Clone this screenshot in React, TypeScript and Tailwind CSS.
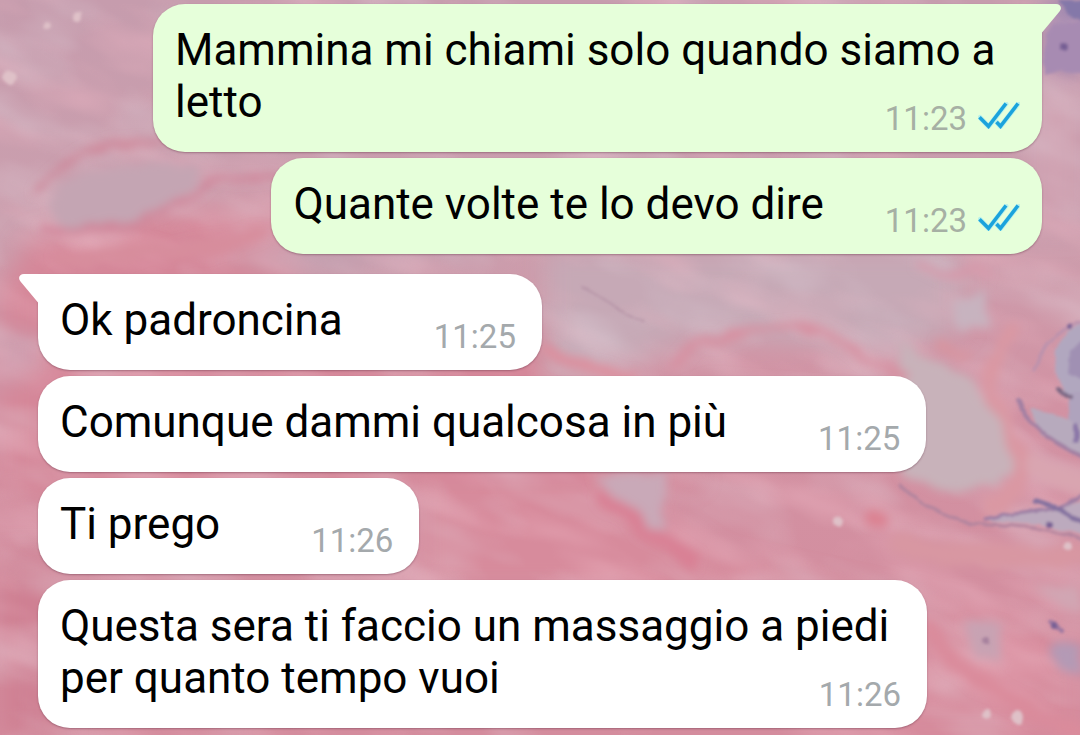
import clsx from 'clsx';

type Message = {
  text: string;
  time: string;
  outgoing?: boolean;
  first?: boolean;
};

const messages: Message[] = [
  { text: 'Mammina mi chiami solo quando siamo a letto', time: '11:23', outgoing: true, first: true },
  { text: 'Quante volte te lo devo dire', time: '11:23', outgoing: true },
  { text: 'Ok padroncina', time: '11:25', first: true },
  { text: 'Comunque dammi qualcosa in più', time: '11:25' },
  { text: 'Ti prego', time: '11:26' },
  { text: 'Questa sera ti faccio un massaggio a piedi per quanto tempo vuoi', time: '11:26' },
];

const ReadTicks = () => (
  <svg className="mb-[6px] h-7 w-[42px]" viewBox="0 0 42 28" fill="none" role="img" aria-label="Letto">
    <g stroke="#8ee4fb" strokeWidth="5" strokeLinecap="round" strokeLinejoin="round" opacity="0.5">
      <path d="M2 15.5 10.5 24.5 28 2" />
      <path d="M19 20.5 22.5 24.5 40 2" />
    </g>
    <g stroke="#1ba3dc" strokeWidth="3.6">
      <path d="M1.500 15.200 10.500 24.300 28 1.500" />
      <path d="M18.500 20 22.500 24.300 40 1.500" />
    </g>
  </svg>
);

const Tail = ({ outgoing }: { outgoing?: boolean }) => (
  <svg
    className={clsx('absolute top-0 h-[30px] w-5', outgoing ? 'left-full -ml-px text-[#e6ffda]' : 'right-full -mr-px -scale-x-100 text-white')}
    viewBox="0 0 20 30"
    fill="currentColor"
    aria-hidden="true"
  >
    <path d="M0 0H15C19.500 0 21.500 4 18.500 7.500L1 28.500V30H0Z" />
  </svg>
);

const Bubble = ({ text, time, outgoing, first }: Message) => (
  <li
    className={clsx(
      'relative max-w-[889px] rounded-[32px] pt-5 pb-6 pl-[22px] shadow-[0_1px_2px_rgba(90,40,60,0.4)]',
      outgoing ? 'self-end bg-[#e6ffda] pr-[22px]' : 'self-start bg-white pr-[26px]',
      first && (outgoing ? 'rounded-tr-none' : 'rounded-tl-none'),
      first && !outgoing && 'mt-[14px]',
    )}
  >
    {first && <Tail outgoing={outgoing} />}
    <p className="text-[44px] leading-[52px] text-black">
      {text}
      {/* floats next to the last line and hangs a little below it */}
      <span className={clsx('float-right -mb-6 flex items-center gap-[11px] pt-6', outgoing ? 'ml-[61px]' : 'ml-[91px]')}>
        <time className={clsx('text-[33px] leading-[38px]', outgoing ? 'text-[#a6b0a4]' : 'text-[#a4a9ac]')}>{time}</time>
        {outgoing && <ReadTicks />}
      </span>
    </p>
  </li>
);

const Wallpaper = () => (
  <svg
    className="absolute inset-0 -z-10 h-full w-full"
    viewBox="0 0 1080 735"
    preserveAspectRatio="xMidYMid slice"
    aria-hidden="true"
  >
    <defs>
      <linearGradient id="base" x1="0" y1="0" x2="0" y2="1">
        <stop offset="0" stopColor="#c69cad" />
        <stop offset="0.3" stopColor="#cb9fae" />
        <stop offset="0.55" stopColor="#d292a3" />
        <stop offset="1" stopColor="#d48c9d" />
      </linearGradient>
      <filter id="wide" x="-20%" y="-20%" width="140%" height="140%">
        <feGaussianBlur stdDeviation="12" />
      </filter>
      <filter id="soft" x="-20%" y="-20%" width="140%" height="140%">
        <feTurbulence type="fractalNoise" baseFrequency="0.03" numOctaves="3" seed="4" result="n" />
        <feDisplacementMap in="SourceGraphic" in2="n" scale="18" xChannelSelector="R" yChannelSelector="G" />
        <feGaussianBlur stdDeviation="5" />
      </filter>
      <filter id="fine" x="-20%" y="-20%" width="140%" height="140%">
        <feTurbulence type="fractalNoise" baseFrequency="0.06" numOctaves="2" seed="9" result="n" />
        <feDisplacementMap in="SourceGraphic" in2="n" scale="6" xChannelSelector="R" yChannelSelector="G" />
        <feGaussianBlur stdDeviation="1.6" />
      </filter>
      {/* stretched noise for the fibres: one pale layer, one dark pink */}
      <filter id="pale" x="0" y="0" width="100%" height="100%">
        <feTurbulence type="fractalNoise" baseFrequency="0.009 0.02" numOctaves="3" seed="12" />
        <feColorMatrix values="0 0 0 0 0.79  0 0 0 0 0.72  0 0 0 0 0.78  2.6 0 0 0 -1.15" />
        <feGaussianBlur stdDeviation="2" />
      </filter>
      <filter id="rosy" x="0" y="0" width="100%" height="100%">
        <feTurbulence type="fractalNoise" baseFrequency="0.008 0.024" numOctaves="3" seed="31" />
        <feColorMatrix values="0 0 0 0 0.85  0 0 0 0 0.47  0 0 0 0 0.55  0 2.8 0 0 -1.3" />
        <feGaussianBlur stdDeviation="2" />
      </filter>
    </defs>
    <rect width="1080" height="735" fill="url(#base)" />

    {/* large tissue areas */}
    <g filter="url(#wide)">
      <path d="M30 240 190 205 300 200V300L560 330 700 480 0 500V290Z" fill="#d58799" />
      <path d="M0 560H60V735H0Z" fill="#cf8093" />
      <path d="M0 335H40V368L0 385Z" fill="#c99bad" />
      <path d="M545 250H960V330L900 350 700 335 600 375H545Z" fill="#c6a9b6" />
      <path d="M420 480H600L720 560 1080 640V735H900L640 590H420Z" fill="#d78b9c" />
      <path d="M1030 85H1080V230H1030Z" fill="#cfa0b0" />
      <path d="M1048 0H1080V75L1050 70Z" fill="#9a86b2" />
      <path d="M215 255 320 240 530 258 300 275Z" fill="#c4a0b0" />
    </g>

    {/* fibres */}
    <g transform="rotate(20 540 367)">
      <rect x="-200" y="-300" width="1500" height="1400" filter="url(#pale)" opacity="0.3" />
      <rect x="-200" y="-300" width="1500" height="1400" filter="url(#rosy)" opacity="0.35" />
    </g>

    <g filter="url(#soft)">
      <path d="M50 205C65 172 120 160 198 165 200 195 160 215 100 225 65 232 45 228 50 205Z" fill="#c4a5b3" />
      <path d="M590 474H665V532L640 515Z" fill="#c9a9b8" />
      <path d="M915 350 965 375 1000 415 1018 470 1000 488 940 490 900 475V340Z" fill="#c8b2ba" />
      <g fill="none" strokeLinecap="round">
        <path d="M38 190C60 160 110 138 170 142" stroke="#cf8699" strokeWidth="6" />
        <path d="M40 232C110 232 160 220 200 190 220 180 250 178 285 178" stroke="#d08297" strokeWidth="6" />
        <path d="M60 258C110 250 180 262 260 235" stroke="#d78d9c" strokeWidth="14" />
        <path d="M545 350C570 365 600 372 630 376" stroke="#dc8f9e" strokeWidth="11" />
        <path d="M672 368C690 345 690 342 720 338 770 322 800 320 850 345 860 355 880 370 905 374" stroke="#d790a1" strokeWidth="8" />
        <path d="M920 265C950 290 970 260 980 275" stroke="#d69aab" strokeWidth="9" />
        <path d="M940 345 965 355" stroke="#d8949f" strokeWidth="9" />
        <path d="M1015 330C985 360 985 400 1010 430 1032 475 1025 500 985 506" stroke="#da98a3" strokeWidth="13" />
        <path d="M1035 465 1085 485" stroke="#d9a5b0" strokeWidth="20" />
        <path d="M600 495C630 515 660 540 690 560" stroke="#d98094" strokeWidth="14" />
        <path d="M900 545C950 555 1000 560 1080 555" stroke="#d897a2" strokeWidth="22" />
        <path d="M870 517 880 518" stroke="#dc8191" strokeWidth="14" />
        <path d="M930 630C960 680 1000 690 1080 735" stroke="#da8b9b" strokeWidth="14" />
      </g>
      <path d="M955 300 985 295 990 325 960 332Z" fill="#c7b3bf" />
      <path d="M965 622H1000V660H975Z" fill="#c8a3b3" />
      <path d="M1050 645H1085V680L1056 668Z" fill="#b49ab5" />
      <path d="M1030 585 1080 590V610L1055 603Z" fill="#d1a6b3" />
    </g>

    {/* violet nuclei along the right edge */}
    <g filter="url(#fine)">
      <path d="M1056 350 1068 332 1084 325V405L1066 395 1055 372Z" fill="#b1a7bf" />
      <path d="M1070 350 1085 335V380L1068 375Z" fill="#a090b3" />
      <path d="M1068 392H1084V436L1070 430Z" fill="#afa3bd" />
      <path d="M1030 408 1084 424V456L1040 435Z" fill="#b7aabd" />
      <path d="M985 520 1045 508 1084 500V535L1040 524Z" fill="#bcaabe" />
      <path d="M1045 35 1055 25 1084 20V75L1060 70 1045 75Z" fill="#a78bb2" />
      <path d="M1058 0H1084V22L1068 14Z" fill="#8478a9" />
      <g fill="none" strokeLinecap="round">
        <path d="M1035 370C1040 345 1055 330 1084 323" stroke="#b992ae" strokeWidth="3" />
        <path d="M1057 388 1070 397" stroke="#776581" strokeWidth="4" />
        <path d="M1018 400C1025 425 1050 440 1084 458" stroke="#a07fa3" strokeWidth="4" />
        <path d="M1076 425V440" stroke="#8b77a8" strokeWidth="6" />
        <path d="M900 485C930 510 955 525 990 524 1030 527 1060 530 1084 540" stroke="#b0849e" strokeWidth="3" />
        <path d="M985 519C1010 512 1040 514 1060 506L1084 495" stroke="#9a7ba3" strokeWidth="3" />
        <path d="M1036 501 1058 508 1084 524" stroke="#82709f" strokeWidth="5" />
        <path d="M583 287C610 300 625 318 645 322" stroke="#b796a8" strokeWidth="2" />
        <path d="M1050 622 1062 630" stroke="#9674a0" strokeWidth="4" />
      </g>
      <g fill="#765f94">
        <circle cx="1064" cy="47" r="4" />
        <circle cx="1055" cy="627" r="3" />
        <circle cx="1050" cy="524" r="3" />
        <circle cx="1070" cy="327" r="3" />
      </g>
      <circle cx="985" cy="641" r="3" fill="#a6809d" />
      <g fill="#dfc1c8">
        <circle cx="9" cy="78" r="7" />
        <circle cx="77" cy="16" r="4" />
        <circle cx="47" cy="25" r="3" />
        <circle cx="987" cy="715" r="5" />
        <circle cx="1017" cy="717" r="6" />
        <circle cx="1068" cy="546" r="4" />
        <circle cx="838" cy="521" r="5" />
      </g>
    </g>
  </svg>
);

export default function App() {
  return (
    <main className="relative isolate min-h-screen overflow-hidden bg-[#cf94a6] px-[38px] pt-1 pb-[7px] font-['Roboto',sans-serif]">
      <Wallpaper />
      <ul className="flex flex-col gap-[6px]">
        {messages.map((message) => (
          <Bubble key={message.text} {...message} />
        ))}
      </ul>
    </main>
  );
}
